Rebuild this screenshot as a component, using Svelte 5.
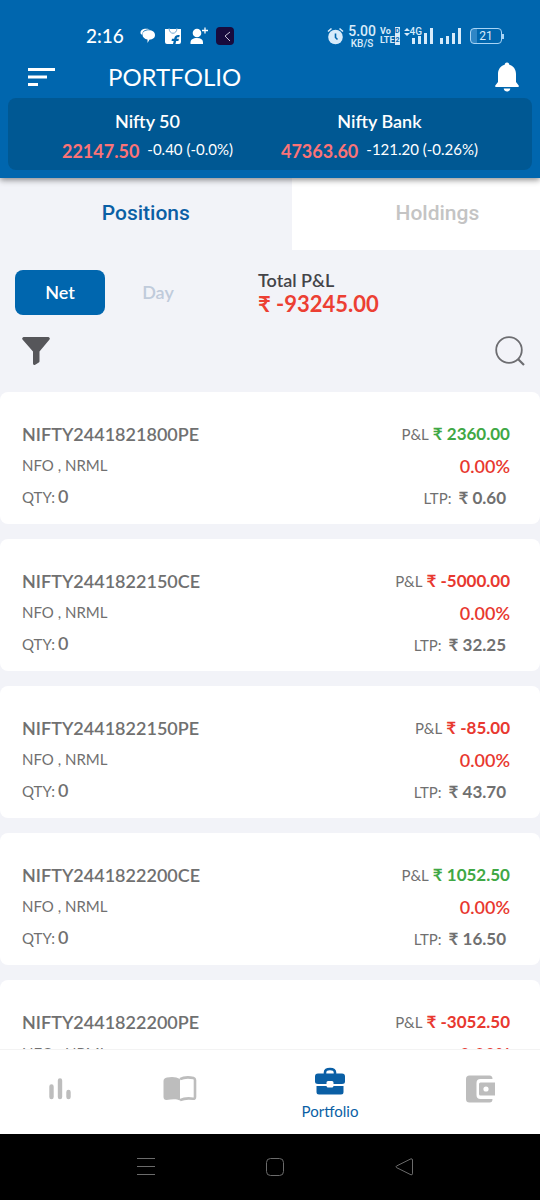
<script>
  const indices = [
    { name: 'Nifty 50', value: '22147.50', change: '-0.40 (-0.0%)' },
    { name: 'Nifty Bank', value: '47363.60', change: '-121.20 (-0.26%)' }
  ];
  const positions = [
    { symbol: 'NIFTY2441821800PE', pnl: '2360.00', ltp: '0.60' },
    { symbol: 'NIFTY2441822150CE', pnl: '-5000.00', ltp: '32.25' },
    { symbol: 'NIFTY2441822150PE', pnl: '-85.00', ltp: '43.70' },
    { symbol: 'NIFTY2441822200CE', pnl: '1052.50', ltp: '16.50' },
    { symbol: 'NIFTY2441822200PE', pnl: '-3052.50' }
  ];
</script>

<div class="app">
  <header class="top">
    <div class="status">
      <div class="status-left">
        <span class="clock">2:16</span>
        <svg width="16" height="16" viewBox="0 0 16 16"><path d="M.5 4.500C.5 1.500 4 .3 7.500.8L10 1.600C5 1.200 2.500 3 2.300 6.500C1 6.500.5 6 .5 4.500z" fill="#fff" /><path d="M2.500 6.500c0-2.800 3-4.200 6.500-4.200s6 1.800 6 4.700-2.200 4.500-5.400 4.500L7.500 15v-3.500C4.500 11 2.500 9.300 2.500 6.500z" fill="#fff" /></svg>
        <svg width="18" height="18" viewBox="0 0 18 18"><path d="M1 2h16v13q0 2-2 2h-3.500l.7-3h2.200l.5-2.200h-2.200c.2-1.500.7-1.600 2.500-1.500l.5-2.300c-3.500-.4-5 .6-5.500 3.800H8l-.5 2.200h2.200L9 17H3q-2 0-2-2z" fill="#fff" /><path d="M5 1c0 7 8 7 8 0" fill="none" stroke="#6fa9d4" stroke-width="1" /></svg>
        <svg width="18" height="18" viewBox="0 0 18 18"><circle cx="7" cy="6" r="4.300" fill="#fff" /><path d="M.5 17v-1.500C.5 12.500 3 11 7 11s6 1.500 6 4.500V17z" fill="#fff" /><path d="M15 .5v6M12 3.500h6" stroke="#fff" stroke-width="1.300" /></svg>
        <svg width="18" height="18" viewBox="0 0 18 18"><rect width="18" height="18" rx="4" fill="#180b3d" /><path d="M14 5L9 9l5 5" fill="none" stroke="#c9c3d8" stroke-width="1" /></svg>
      </div>
      <div class="status-right">
        <svg width="17" height="18" viewBox="0 0 17 18"><circle cx="8.500" cy="10" r="7.300" fill="#d8ebfa" /><path d="M1 4.500L4.500 1.500M16 4.500L12.500 1.500" stroke="#d8ebfa" stroke-width="1.600" /><path d="M8.500 6.500v4l2 2" fill="none" stroke="#0065ad" stroke-width="1.600" /></svg>
        <span class="stack"><b>5.00</b><small>KB/S</small></span>
        <span class="volte"><span>Vo<i>D</i></span><span>LTE<i>2</i></span></span>
        <span class="signal">
          <svg width="6" height="8" viewBox="0 0 6 8"><path d="M3 0l3 3H0zM3 8l3-3H0z" fill="#d8ebfa" /></svg>
          <small>4G</small>
          <svg width="21" height="16" viewBox="0 0 21 16"><path d="M0 10h3v6H0zM6 8h3v8H6zM12 5h3v11h-3zM18 0h3v16h-3z" fill="#d8ebfa" /></svg>
        </span>
        <svg width="21" height="16" viewBox="0 0 21 16"><path d="M0 10h3v6H0zM6 8h3v8H6zM12 5h3v11h-3zM18 0h3v16h-3z" fill="#d8ebfa" /></svg>
        <span class="battery">21</span>
      </div>
    </div>
    <div class="titlebar">
      <button aria-label="Menu"><svg width="28" height="20" viewBox="0 0 28 20"><path d="M0 1h27v3H0zM0 8.500h19v3H0zM0 16h10v3H0z" fill="#fff" /></svg></button>
      <h1>PORTFOLIO</h1>
      <button aria-label="Notifications"><svg width="26" height="30" viewBox="0 0 26 30"><path d="M13 .5c1.600 0 2.300 1 2.300 2.300 4.200 1.200 6.700 4.700 6.700 9.200v8l2.700 3.500q.6 1.500-.7 1.500H2q-1.300 0-.7-1.500L4 20v-8c0-4.500 2.500-8 6.700-9.200C10.700 1.500 11.400.5 13 .5zM9.700 26.500h6.600c-.3 4-6.300 4-6.600 0z" fill="#fff" /></svg></button>
    </div>
    <section class="indices">
      {#each indices as item}
        <div class="index">
          <strong>{item.name}</strong>
          <div class="quote"><span class="value">{item.value}</span><span class="change">{item.change}</span></div>
        </div>
      {/each}
    </section>
  </header>

  <div class="tabs">
    <button class="tab active">Positions</button>
    <button class="tab">Holdings</button>
  </div>

  <section class="summary">
    <button class="period active">Net</button>
    <button class="period">Day</button>
    <div class="total"><span>Total P&amp;L</span><strong>₹ -93245.00</strong></div>
  </section>

  <div class="tools">
    <button aria-label="Filter"><svg width="28" height="28" viewBox="0 0 28 28"><path d="M1.500 0h25q2 .8 1 2.500L17.500 14.500v9.700q0 .8-.7 1.300l-3.600 2.200q-2.200.8-2.200-1.200v-12L.5 2.500q-1-1.700 1-2.500z" fill="#56565a" /></svg></button>
    <button aria-label="Search"><svg width="30" height="30" viewBox="0 0 30 30" fill="none" stroke="#6d6d71" stroke-width="1.800"><circle cx="14" cy="14" r="12.800" /><path d="M23 23l6 6" stroke-width="2.200" /></svg></button>
  </div>

  <main class="list">
    {#each positions as p}
      <article class="card">
        <div class="col">
          <strong>{p.symbol}</strong>
          <span>NFO , NRML</span>
          {#if p.ltp}<span class="qty">QTY:<b>0</b></span>{/if}
        </div>
        <div class="col right">
          <span class="pnl">P&amp;L<b class={p.pnl.startsWith('-') ? 'loss' : 'gain'}>₹ {p.pnl}</b></span>
          <b class="loss">0.00%</b>
          {#if p.ltp}<span class="ltp">LTP:<b>₹ {p.ltp}</b></span>{/if}
        </div>
      </article>
    {/each}
  </main>

  <nav class="bottom">
    <button aria-label="Markets"><svg width="22" height="22" viewBox="0 0 22 22" stroke="#bdbdbd" stroke-width="4.400" stroke-linecap="round"><path d="M2.500 8.500v10.500M11 2.500v16.500M19.500 14v5" /></svg></button>
    <button aria-label="Orders"><svg width="34" height="26" viewBox="0 0 34 26"><path d="M4 1.500C9 .5 13.500.8 17 3.200v21.300C13.500 22.600 9 23 3.500 24Q.5 24 .5 21V5q0-3 3.500-3.500z" fill="#bdbdbd" /><path d="M17 3.200C21 1 25.500 1 30.500 2q1.500.4 1.500 2v17q0 2-2 1.700-7.500-1.200-13 1.500" fill="none" stroke="#bdbdbd" stroke-width="2.600" /></svg></button>
    <button class="wide"><svg width="30" height="28" viewBox="0 0 30 28"><path d="M10 8V5.500Q10 2 15 2t5 3.500V8" fill="none" stroke="#0a5fa5" stroke-width="2.600" /><path d="M3 6.500h24q3 0 3 3v5q0 2.500-3 2.500h-8.500v-1.500q0-1.500-1.500-1.500h-4q-1.500 0-1.500 1.500V17H3q-3 0-3-2.500v-5q0-3 3-3zM1.500 19h10q.3 1.500 1.500 1.500h4q1.200 0 1.500-1.500h10v6q0 2.500-2.500 2.500H4q-2.500 0-2.500-2.500z" fill="#0a5fa5" /></svg><span>Portfolio</span></button>
    <button aria-label="Funds"><svg width="30" height="28" viewBox="0 0 30 28"><path d="M4.500.5h20q3 0 3 3.500H15.500q-4 0-4 4v12q0 4 4 4h12q0 3.500-3 3.500h-20q-3.500 0-3.500-3.500V4Q1 .5 4.500.5z" fill="#bdbdbd" /><path fill-rule="evenodd" d="M15.500 7.500H30v13H15.500q-1.500 0-1.500-1.500V9q0-1.500 1.500-1.500zM21 11.400a2.600 2.600 0 100 5.200 2.600 2.600 0 000-5.200z" fill="#bdbdbd" /></svg></button>
  </nav>

  <footer class="system">
    <button aria-label="Recent apps"><svg width="20" height="20" viewBox="0 0 20 20" stroke="#6b6b6b"><path d="M1 1.500h18M1 9.500h18M1 17.500h18" /></svg></button>
    <button aria-label="Home"><svg width="20" height="20" viewBox="0 0 20 20" fill="none" stroke="#6b6b6b"><rect x="1.500" y="1.500" width="17" height="17" rx="4" /></svg></button>
    <button aria-label="Back"><svg width="20" height="20" viewBox="0 0 20 20" fill="none" stroke="#6b6b6b"><path d="M17 1.800L2.500 9q-1 .8 0 1.600L17 17.800q1.500.2 1.500-1V3q0-1.400-1.500-1.200z" /></svg></button>
  </footer>
</div>

<style>
  :global(body) { margin: 0; }
  * { box-sizing: border-box; }
  .app {
    display: flex;
    flex-direction: column;
    height: 100vh;
    overflow: hidden;
    background: #f2f3f8;
    font-family: Lato, sans-serif;
    color: #707070;
  }
  svg { display: block; flex: none; }
  button { border: 0; padding: 0; margin: 0; background: none; font: inherit; color: inherit; display: flex; align-items: center; justify-content: center; }
  .top {
    flex: none;
    padding: 20px 8px 8px;
    background: #0066ae;
    color: #fff;
    box-shadow: 0 2px 6px rgba(0, 0, 0, .45);
    z-index: 1;
  }
  .status { display: flex; justify-content: space-between; align-items: center; height: 32px; padding: 0 30px 0 78px; }
  .status-left, .status-right { display: flex; align-items: center; }
  .status-left { gap: 8px; }
  .status-right { gap: 4px; color: #d8ebfa; font-family: Roboto, sans-serif; }
  .clock { font: 500 19px/24px Lato, sans-serif; margin-right: 8px; }
  .stack { display: flex; flex-direction: column; align-items: center; }
  .stack b { font-size: 14px; line-height: 14px; font-weight: 500; }
  .stack small { font-size: 10px; line-height: 11px; font-weight: 500; }
  .volte { display: flex; flex-direction: column; font-size: 9px; line-height: 9px; font-weight: 700; }
  .volte span { display: flex; justify-content: space-between; gap: 1px; }
  .volte i { font-style: normal; font-size: 7px; line-height: 8px; background: #d8ebfa; color: #0066ae; }
  .signal { display: flex; align-items: flex-start; height: 16px; margin-right: 3px; }
  .signal small { font-size: 10px; line-height: 8px; font-weight: 500; margin-right: -10px; }
  .battery { position: relative; display: flex; align-items: center; justify-content: center; width: 32px; height: 16px; margin-left: 5px; border: 1px solid #a8d4f5; border-radius: 4px; background: linear-gradient(90deg, #2f86c6 20%, transparent 20%); font-size: 12px; }
  .battery::after { content: ''; position: absolute; left: 31px; top: 5px; width: 2px; height: 5px; background: #a8d4f5; }
  .titlebar { display: flex; align-items: center; height: 46px; padding: 4px 12px 0 20px; }
  h1 { flex: 1; margin: 0 0 0 52px; font-size: 24px; line-height: 32px; font-weight: 400; }
  .indices { display: flex; justify-content: center; gap: 48px; padding: 12px 0 7px; border-radius: 8px; background: #005893; }
  .index { display: flex; flex-direction: column; align-items: center; gap: 7px; }
  .index strong { font-size: 18px; line-height: 22px; font-weight: 600; }
  .quote { display: flex; align-items: center; gap: 8px; line-height: 24px; }
  .value { font-size: 18px; font-weight: 700; color: #fb7377; }
  .change { font-size: 15px; line-height: 20px; align-self: flex-start; }

  .tabs { display: flex; flex: none; height: 72px; overflow: hidden; font: 500 21px/24px Roboto, sans-serif; }
  .tab { flex: 0 0 54%; padding-bottom: 2px; background: #fff; color: #c4c4c4; }
  .tab.active { background: #f2f3f8; color: #0a5fa5; }

  .summary { display: flex; flex: none; align-items: center; padding: 18px 15px 0; }
  .period { width: 90px; height: 45px; border-radius: 8px; font-size: 18px; font-weight: 600; color: #c0cbdb; }
  .period.active { background: #0066ae; color: #fff; margin-right: 8px; }
  .total { display: flex; flex-direction: column; margin-left: 55px; line-height: 24px; }
  .total span { font-size: 18px; font-weight: 600; color: #444448; }
  .total strong { font-size: 22px; font-weight: 700; color: #ec3f33; }

  .tools { display: flex; flex: none; justify-content: space-between; align-items: center; padding: 20px 15px 26px 22px; }

  .list { flex: 1; min-height: 0; overflow: hidden; display: flex; flex-direction: column; gap: 15px; }
  .card { flex: none; display: flex; justify-content: space-between; min-height: 132px; padding: 30px 30px 14px 22px; border-radius: 8px; background: #fff; font-size: 15px; line-height: 24px; }
  .col { display: flex; flex-direction: column; align-items: flex-start; gap: 7px; }
  .col > * { height: 24px; }
  .col span { display: flex; align-items: baseline; }
  .col strong, .col b { font-size: 18px; font-weight: 600; }
  .qty { gap: 3px; }
  .right { align-items: flex-end; gap: 8px; }
  .pnl { gap: 4px; }
  .ltp { gap: 7px; margin-right: 4px; }
  .col .pnl b, .col .ltp b { font-size: 17px; font-weight: 700; }
  .gain { color: #3fa845; }
  .loss { color: #e8382f; }

  .bottom { display: flex; flex: none; height: 85px; padding-bottom: 7px; background: #fff; border-top: 1px solid #f3f3f3; z-index: 1; }
  .bottom button { flex: 2; flex-direction: column; gap: 6px; }
  .bottom .wide { flex: 3; padding-top: 10px; }
  .bottom span { font-size: 15px; line-height: 20px; color: #0a5fa5; }

  .system { display: flex; flex: none; justify-content: center; gap: 109px; align-items: center; height: 66px; padding-left: 9px; background: #000; }
</style>
